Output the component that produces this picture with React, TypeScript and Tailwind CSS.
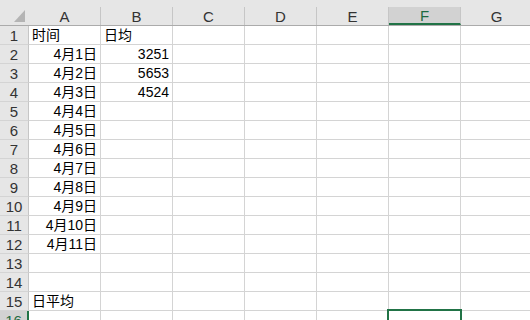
import React from "react";

const cols = ["A", "B", "C", "D", "E", "F", "G"];

type Cell = { text: string; align?: "left" | "right" };

const data: Record<number, Record<string, Cell>> = {
  1: { A: { text: "时间" }, B: { text: "日均" } },
  2: { B: { text: "3251", align: "right" } },
  3: { B: { text: "5653", align: "right" } },
  4: { B: { text: "4524", align: "right" } },
  15: { A: { text: "日平均" } },
};
for (let r = 2; r <= 12; r++) {
  data[r] = { ...(data[r] || {}), A: { text: `4月${r - 1}日`, align: "right" } };
}

export default function App() {
  const rows = Array.from({ length: 16 }, (_, i) => i + 1);

  return (
    <div className="relative w-[530px] h-[320px] overflow-hidden bg-white text-[14px] text-black [font-family:'Liberation_Sans','Noto_Sans_CJK_SC',sans-serif]">
      {/* column headers */}
      <div className="flex h-[26px] w-[540px] bg-[#e6e6e6] border-b border-[#ababab]">
        <div className="w-[29px] shrink-0 relative">
          <svg className="absolute left-[14px] top-[10px]" width="11" height="12" viewBox="0 0 11 12">
            <polygon points="11,0 11,12 0,12" fill="#b4b4b4" />
          </svg>
        </div>
        {cols.map((c) => (
          <div key={c} className={`w-[72px] shrink-0 mt-[7px] h-[18px] border-r border-[#c6c6c6] flex items-center justify-center text-[15px] leading-none ${c === "F" ? "bg-[#d2d2d2] border-b-2 border-b-[#217346] text-[#1e6b41]" : "text-[#333]"}`}>
            {c}
          </div>
        ))}
      </div>

      {/* grid rows */}
      {rows.map((r) => (
        <div key={r} className="flex h-[19px] w-[540px]">
          <div className={`w-[29px] shrink-0 border-b border-[#d4d4d4] flex items-center justify-center text-[15px] leading-none ${r === 16 ? "bg-[#d2d2d2] border-r-2 border-r-[#217346] text-[#1e6b41]" : "bg-[#e6e6e6] border-r border-r-[#c6c6c6] text-[#333]"}`}>
            {r}
          </div>
          {cols.map((c) => {
            const cell = data[r]?.[c];
            return (
              <div key={c} className={`w-[72px] shrink-0 border-r border-b border-[#d4d4d4] px-[3px] leading-[18px] whitespace-nowrap ${cell?.align === "right" ? "text-right" : "text-left"}`}>
                {cell?.text}
              </div>
            );
          })}
        </div>
      ))}

      {/* active cell F16 */}
      <div className="absolute left-[387px] top-[309px] w-[75px] h-[20px] border-2 border-[#217346]" />
    </div>
  );
}
